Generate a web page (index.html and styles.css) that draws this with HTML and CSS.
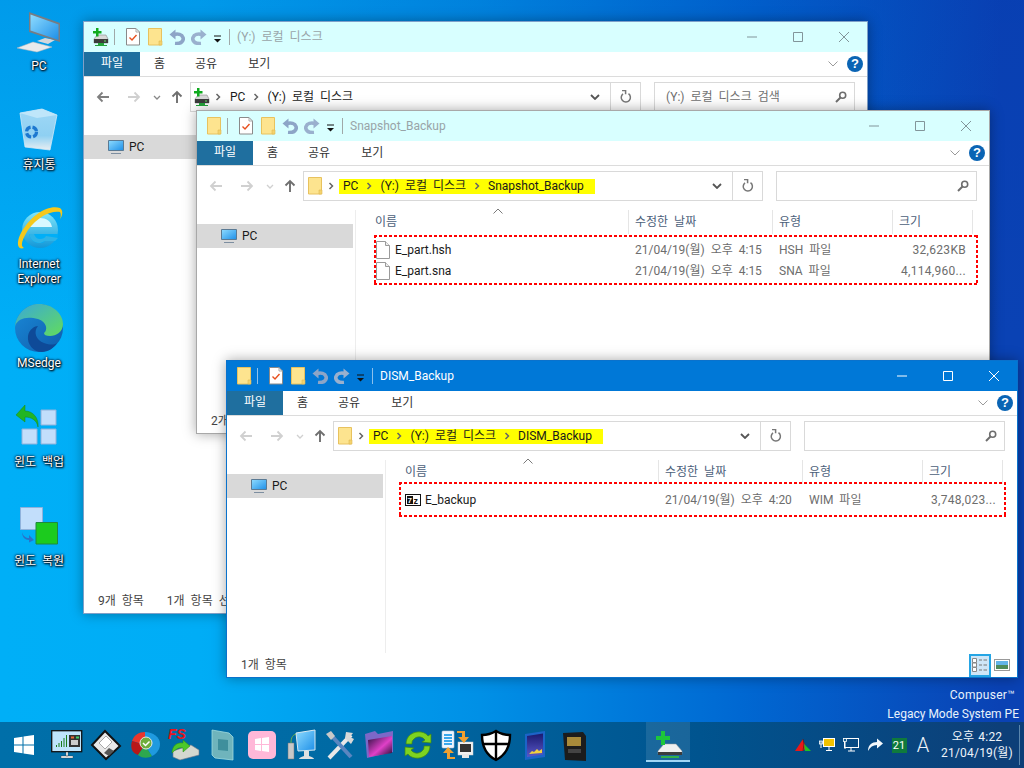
FILE: index.html
```html
<!DOCTYPE html>
<html lang="ko">
<head>
<meta charset="utf-8">
<title>Desktop</title>
<link rel="stylesheet" href="styles.css">
</head>
<body>
<svg class="defs" width="0" height="0" aria-hidden="true">
  <defs>
    <linearGradient id="gScreen" x1="0" y1="0" x2="1" y2="1"><stop offset="0" stop-color="#8fdcff"/><stop offset="1" stop-color="#1d8fe8"/></linearGradient>
    <linearGradient id="gE" x1="0" y1="0" x2="0" y2="1"><stop offset="0" stop-color="#7fe6fa"/><stop offset="1" stop-color="#1297d8"/></linearGradient>
    <linearGradient id="gEdgeG" x1="0" y1="0" x2="1" y2="1"><stop offset="0" stop-color="#3aa8d8"/><stop offset="1" stop-color="#62dc5c"/></linearGradient>
    <linearGradient id="gEdgeB" x1="0" y1="0" x2="1" y2="1"><stop offset="0" stop-color="#1a8ad8"/><stop offset="1" stop-color="#0f5cab"/></linearGradient>
    <linearGradient id="gBin" x1="0" y1="0" x2="0" y2="1"><stop offset="0" stop-color="#9fd8f6"/><stop offset=".65" stop-color="#8fd0f2"/><stop offset="1" stop-color="#e8eef2"/></linearGradient>
    <linearGradient id="gNeb" x1="0" y1="0" x2="1" y2="1"><stop offset="0" stop-color="#2a1040"/><stop offset=".55" stop-color="#e040c8"/><stop offset="1" stop-color="#180a28"/></linearGradient>
    <linearGradient id="gBluePhone" x1="0" y1="0" x2="0" y2="1"><stop offset="0" stop-color="#1a1a70"/><stop offset="1" stop-color="#5a58c8"/></linearGradient>
    <symbol id="i-folder" viewBox="0 0 16 18"><path d="M1.500 .5h13v16.500h-13z" fill="#fde48f" stroke="#e8c25e"/><path d="M12 13h3v4h-3z" fill="#f4d36e" stroke="#e0b850" stroke-width=".6"/></symbol>
    <symbol id="i-note" viewBox="0 0 16 18"><path d="M1.500 .5h9.500l3.500 3.500v13h-13z" fill="#fff" stroke="#8a8a8a"/><path d="M11 .5v3.500h3.500" fill="none" stroke="#aaa"/><path d="M4.500 9.500l2.500 2.500 4.500-5" fill="none" stroke="#e8501e" stroke-width="1.400"/></symbol>
    <symbol id="i-undo" viewBox="0 0 16 16"><path d="M6 14.500C12.500 15 15 11.500 14 8.500 13 5.500 9 4.500 5 5.500" fill="none" stroke="#8da5c7" stroke-width="3.600"/><path d="M.5 5.500L6.500 .5v10z" fill="#8da5c7"/></symbol>
    <symbol id="i-redo" viewBox="0 0 16 16"><path d="M10 14.500C3.500 15 1 11.500 2 8.500 3 5.500 7 4.500 11 5.500" fill="none" stroke="#9ab0ce" stroke-width="3.600"/><path d="M15.500 5.500L9.500 .5v10z" fill="#9ab0ce"/></symbol>
    <symbol id="i-dd" viewBox="0 0 9 8"><path d="M1 1h7" stroke="#111" stroke-width="1"/><path d="M1 4h7l-3.500 3.500z" fill="#111"/></symbol>
    <symbol id="i-drive" viewBox="0 0 16 18"><path d="M4 7h9l2 4v4H1v-4z" fill="#d8d8d8" stroke="#8a8a8a" stroke-width=".6"/><path d="M1 11h14v4H1z" fill="#3c3c3c"/><path d="M11 12.500h2v1h-2z" fill="#5fe05f"/><path d="M5 15h6v2h3v1H2v-1h3z" fill="#23a33a"/><path d="M3 0h2.500v3H8.500v2.500H5.500v3H3v-3H0V3h3z" fill="#0faa1e"/></symbol>
    <symbol id="i-pc" viewBox="0 0 16 16"><path d="M.5 1.500h15v10H.5z" fill="url(#gScreen)" stroke="#5a7a94"/><path d="M3 14.500h10" stroke="#7d8ea0" stroke-width="1"/></symbol>
    <symbol id="i-page" viewBox="0 0 14 18"><path d="M.5 .5h9l4 4v13H.5z" fill="#fff" stroke="#9a9a9a"/><path d="M9.500 .5v4h4" fill="#eee" stroke="#9a9a9a"/></symbol>
    <symbol id="i-back" viewBox="0 0 14 12"><path d="M13 6H2M6.500 1.500L2 6l4.500 4.500" fill="none" stroke="currentColor" stroke-width="1.800"/></symbol>
    <symbol id="i-fwd" viewBox="0 0 14 12"><path d="M1 6h11M7.500 1.500L12 6l-4.500 4.500" fill="none" stroke="currentColor" stroke-width="1.800"/></symbol>
    <symbol id="i-hist" viewBox="0 0 8 5"><path d="M1 1l3 3 3-3" fill="none" stroke="currentColor" stroke-width="1.300"/></symbol>
    <symbol id="i-up" viewBox="0 0 12 14"><path d="M6 13V2M1.500 6.500L6 2l4.500 4.500" fill="none" stroke="#6f6f6f" stroke-width="1.900"/></symbol>
    <symbol id="i-crumb" viewBox="0 0 6 8"><path d="M1.500 1L4.500 4l-3 3" fill="none" stroke="#666" stroke-width="1.500"/></symbol>
    <symbol id="i-down" viewBox="0 0 10 6"><path d="M1 1l4 4 4-4" fill="none" stroke="#555" stroke-width="1.800"/></symbol>
    <symbol id="i-refresh" viewBox="0 0 12 14"><path d="M8.500 3.700A4.600 4.600 0 1 1 3 3.800" fill="none" stroke="#777" stroke-width="1.500"/><path d="M2 .5h3.600v3.800" fill="none" stroke="#777" stroke-width="1.500"/></symbol>
    <symbol id="i-search" viewBox="0 0 12 12"><circle cx="7.700" cy="4.300" r="3" fill="none" stroke="#6e6e6e" stroke-width="1.600"/><path d="M5.500 6.500L1 11" stroke="#6e6e6e" stroke-width="2"/></symbol>
    <symbol id="i-chev" viewBox="0 0 10 6"><path d="M.5 .5L5 5 9.500 .5" fill="none" stroke="#9a9a9a" stroke-width="1"/></symbol>
    <symbol id="i-sort" viewBox="0 0 10 6"><path d="M.5 5.500L5 1l4.500 4.500" fill="none" stroke="#7a7a7a" stroke-width="1"/></symbol>
    <symbol id="i-min" viewBox="0 0 10 10"><path d="M0 5h10" stroke="currentColor" stroke-width="1"/></symbol>
    <symbol id="i-max" viewBox="0 0 10 10"><path d="M.5 .5h9v9h-9z" fill="none" stroke="currentColor" stroke-width="1"/></symbol>
    <symbol id="i-close" viewBox="0 0 10 10"><path d="M0 0l10 10M10 0L0 10" stroke="currentColor" stroke-width="1"/></symbol>
  </defs>
</svg>

<main class="desktop">
  <section class="desk-icons">
    <div class="desk-item">
      <svg class="desk-svg" viewBox="14 8 50 50"><path d="M17 48l16-6 19 5-15 5z" fill="#e8eaec" stroke="#b0b4b8" stroke-width=".5"/><path d="M37 41l8-3 10 2-7 4z" fill="#d4d8dc"/><path d="M29 12l31 11v19L29 32z" fill="#767d84"/><path d="M30.500 14.500l28 10v15.500l-28-9.500z" fill="url(#gScreen)"/></svg>
      <span class="desk-label">PC</span>
    </div>
    <div class="desk-item">
      <svg class="desk-svg" viewBox="14 107 50 50"><path d="M20 113l22-4 15 6-7 35-25-3z" fill="url(#gBin)" stroke="#cfe8f8" stroke-width=".8"/><path d="M20 113l22-4 15 6-20 3z" fill="#bfe6fa"/><circle cx="31.500" cy="132" r="5" fill="none" stroke="#1c78d0" stroke-width="3.200" stroke-dasharray="6 2"/></svg>
      <span class="desk-label">휴지통</span>
    </div>
    <div class="desk-item">
      <svg class="desk-svg" viewBox="14 206 50 50"><circle cx="40" cy="230" r="18" fill="url(#gE)"/><path d="M28 227C29 221 34 218 40 218 46 218 51 221 52 227z" fill="#d8f8ff"/><path d="M29 234h29c0 3-1 5-2 7H45c-2 2-4 2-6 2-5 0-9-4-10-9z" fill="#00aff7"/><path d="M34 234c1 3 3 5 6 5 3 0 5-1 6-3l12 2-3 3H45l-5 2c-6 0-10-4-11-9z" fill="#2db4e8"/><path d="M60 208C50 204 30 214 20 235 16 244 18 250 24 248 20 246 22 240 28 230 38 216 52 210 60 212 61 214 61 216 60 219 63 215 63 210 60 208z" fill="#f5c81c"/></svg>
      <span class="desk-label">Internet<br>Explorer</span>
    </div>
    <div class="desk-item">
      <svg class="desk-svg" viewBox="14 305 50 50"><circle cx="39" cy="328" r="24" fill="url(#gEdgeB)"/><path d="M15 326C17 312 28 304 39 304 53 304 63 314 63 324 63 332 56 336 50 336 46 336 44 335 44 333 48 330 47 322 38 319 27 316 18 318 15 326z" fill="url(#gEdgeG)"/><path d="M42 352C33 352 27 344 28 336 29 329 35 326 38 326 33 332 36 340 44 343 50 345 54 345 57 343 54 348 48 352 42 352z" fill="#0e4a98"/></svg>
      <span class="desk-label">MSedge</span>
    </div>
    <div class="desk-item">
      <svg class="desk-svg" viewBox="14 404 50 50"><path d="M41 410h15v15H41zM22 429h15v15H22zM41 429h15v15H41z" fill="#c2defb" stroke="#8fb2dc"/><path d="M38 427C37 420 31 417 25 417v5L16 415l9-10v6C33 411 39 418 38 427z" fill="#22b522" stroke="#178a17" stroke-width=".5"/></svg>
      <span class="desk-label">윈도 백업</span>
    </div>
    <div class="desk-item">
      <svg class="desk-svg" viewBox="14 503 50 50"><path d="M20.500 507.500h22v22h-22z" fill="#c2defb" stroke="#8fb2dc"/><path d="M36 522.500h21.500v21.500H36z" fill="#1ccb1e" stroke="#1e8a3c"/><path d="M22 532c1 4 4 6 7 6v-3l5 5-5 2.500V540c-4 0-7-3-7-8z" fill="#2a72c8"/></svg>
      <span class="desk-label">윈도 복원</span>
    </div>
  </section>

  <p class="watermark"><span>Compuser™</span><span>Legacy Mode System PE</span></p>

  <!-- Window 1 -->
  <article class="win win-a inactive">
    <header class="titlebar">
      <svg class="qa-icon"><use href="#i-drive"/></svg>
      <i class="qa-sep first"></i>
      <span class="qa"><svg class="qa-icon"><use href="#i-note"/></svg></span>
      <span class="qa"><svg class="qa-icon"><use href="#i-folder"/></svg></span>
      <span class="qa"><svg class="qa-arrow"><use href="#i-undo"/></svg></span>
      <span class="qa"><svg class="qa-arrow"><use href="#i-redo"/></svg></span>
      <span class="qa-dd"><svg class="dd-icon"><use href="#i-dd"/></svg></span>
      <i class="qa-sep last"></i>
      <span class="title-text">(Y:) 로컬 디스크</span>
      <span class="controls">
        <span class="ctl"><svg class="ctl-icon"><use href="#i-min"/></svg></span>
        <span class="ctl"><svg class="ctl-icon"><use href="#i-max"/></svg></span>
        <span class="ctl"><svg class="ctl-icon"><use href="#i-close"/></svg></span>
      </span>
    </header>
    <nav class="tabs">
      <span class="tab-file">파일</span><span class="tab t1">홈</span><span class="tab t2">공유</span><span class="tab t3">보기</span>
      <svg class="rib-chev"><use href="#i-chev"/></svg>
      <span class="help">?</span>
    </nav>
    <div class="toolbar">
      <span class="nav-btns strong">
        <svg class="nb back"><use href="#i-back"/></svg>
        <svg class="nb fwd"><use href="#i-fwd"/></svg>
        <svg class="nb hist"><use href="#i-hist"/></svg>
        <svg class="nb up"><use href="#i-up"/></svg>
      </span>
      <div class="address">
        <svg class="addr-icon"><use href="#i-drive"/></svg>
        <svg class="crumb first-crumb"><use href="#i-crumb"/></svg>
        <div class="crumbs">
          <span>PC</span><svg class="crumb"><use href="#i-crumb"/></svg><span>(Y:) 로컬 디스크</span>
        </div>
        <span class="addr-btn push"><svg class="down"><use href="#i-down"/></svg></span>
        <span class="addr-btn line"><svg class="refresh"><use href="#i-refresh"/></svg></span>
      </div>
      <div class="searchbox"><span class="placeholder">(Y:) 로컬 디스크 검색</span><svg class="search"><use href="#i-search"/></svg></div>
    </div>
    <div class="content">
      <aside class="pane"><div class="pane-item"><svg class="pc-icon"><use href="#i-pc"/></svg>PC</div></aside>
    </div>
    <footer class="status"><span class="st1">9개 항목</span><span class="st2">1개 항목 선택함</span></footer>
  </article>

  <!-- Window 2 -->
  <article class="win win-b inactive">
    <header class="titlebar">
      <svg class="qa-icon"><use href="#i-folder"/></svg>
      <i class="qa-sep first"></i>
      <span class="qa"><svg class="qa-icon"><use href="#i-note"/></svg></span>
      <span class="qa"><svg class="qa-icon"><use href="#i-folder"/></svg></span>
      <span class="qa"><svg class="qa-arrow"><use href="#i-undo"/></svg></span>
      <span class="qa"><svg class="qa-arrow"><use href="#i-redo"/></svg></span>
      <span class="qa-dd"><svg class="dd-icon"><use href="#i-dd"/></svg></span>
      <i class="qa-sep last"></i>
      <span class="title-text">Snapshot_Backup</span>
      <span class="controls">
        <span class="ctl"><svg class="ctl-icon"><use href="#i-min"/></svg></span>
        <span class="ctl"><svg class="ctl-icon"><use href="#i-max"/></svg></span>
        <span class="ctl"><svg class="ctl-icon"><use href="#i-close"/></svg></span>
      </span>
    </header>
    <nav class="tabs">
      <span class="tab-file">파일</span><span class="tab t1">홈</span><span class="tab t2">공유</span><span class="tab t3">보기</span>
      <svg class="rib-chev"><use href="#i-chev"/></svg>
      <span class="help">?</span>
    </nav>
    <div class="toolbar">
      <span class="nav-btns">
        <svg class="nb back"><use href="#i-back"/></svg>
        <svg class="nb fwd"><use href="#i-fwd"/></svg>
        <svg class="nb hist"><use href="#i-hist"/></svg>
        <svg class="nb up"><use href="#i-up"/></svg>
      </span>
      <div class="address">
        <svg class="addr-icon"><use href="#i-folder"/></svg>
        <svg class="crumb first-crumb"><use href="#i-crumb"/></svg>
        <div class="crumbs mark">
          <span>PC</span><svg class="crumb"><use href="#i-crumb"/></svg><span>(Y:) 로컬 디스크</span><svg class="crumb"><use href="#i-crumb"/></svg><span>Snapshot_Backup</span>
        </div>
        <span class="addr-btn push"><svg class="down"><use href="#i-down"/></svg></span>
        <span class="addr-btn line"><svg class="refresh"><use href="#i-refresh"/></svg></span>
      </div>
      <div class="searchbox"><svg class="search"><use href="#i-search"/></svg></div>
    </div>
    <div class="content">
      <aside class="pane"><div class="pane-item"><svg class="pc-icon"><use href="#i-pc"/></svg>PC</div></aside>
      <div class="list">
        <svg class="sort"><use href="#i-sort"/></svg>
        <div class="row head"><span class="c-name">이름</span><span class="c-date">수정한 날짜</span><span class="c-type">유형</span><span class="c-size">크기</span></div>
        <div class="row item"><span class="c-name"><svg class="page"><use href="#i-page"/></svg>E_part.hsh</span><span class="c-date">21/04/19(월) 오후 4:15</span><span class="c-type">HSH 파일</span><span class="c-size">32,623KB</span></div>
        <div class="row item"><span class="c-name"><svg class="page"><use href="#i-page"/></svg>E_part.sna</span><span class="c-date">21/04/19(월) 오후 4:15</span><span class="c-type">SNA 파일</span><span class="c-size">4,114,960...</span></div>
      </div>
    </div>
    <footer class="status"><span class="st1">2개 항목</span></footer>
    <div class="redbox red-b"></div>
  </article>

  <!-- Window 3 -->
  <article class="win win-c active">
    <header class="titlebar">
      <svg class="qa-icon"><use href="#i-folder"/></svg>
      <i class="qa-sep first"></i>
      <span class="qa"><svg class="qa-icon"><use href="#i-note"/></svg></span>
      <span class="qa"><svg class="qa-icon"><use href="#i-folder"/></svg></span>
      <span class="qa"><svg class="qa-arrow"><use href="#i-undo"/></svg></span>
      <span class="qa"><svg class="qa-arrow"><use href="#i-redo"/></svg></span>
      <span class="qa-dd"><svg class="dd-icon"><use href="#i-dd"/></svg></span>
      <i class="qa-sep last"></i>
      <span class="title-text">DISM_Backup</span>
      <span class="controls">
        <span class="ctl"><svg class="ctl-icon"><use href="#i-min"/></svg></span>
        <span class="ctl"><svg class="ctl-icon"><use href="#i-max"/></svg></span>
        <span class="ctl"><svg class="ctl-icon"><use href="#i-close"/></svg></span>
      </span>
    </header>
    <nav class="tabs">
      <span class="tab-file">파일</span><span class="tab t1">홈</span><span class="tab t2">공유</span><span class="tab t3">보기</span>
      <svg class="rib-chev"><use href="#i-chev"/></svg>
      <span class="help">?</span>
    </nav>
    <div class="toolbar">
      <span class="nav-btns">
        <svg class="nb back"><use href="#i-back"/></svg>
        <svg class="nb fwd"><use href="#i-fwd"/></svg>
        <svg class="nb hist"><use href="#i-hist"/></svg>
        <svg class="nb up"><use href="#i-up"/></svg>
      </span>
      <div class="address">
        <svg class="addr-icon"><use href="#i-folder"/></svg>
        <svg class="crumb first-crumb"><use href="#i-crumb"/></svg>
        <div class="crumbs mark">
          <span>PC</span><svg class="crumb"><use href="#i-crumb"/></svg><span>(Y:) 로컬 디스크</span><svg class="crumb"><use href="#i-crumb"/></svg><span>DISM_Backup</span>
        </div>
        <span class="addr-btn push"><svg class="down"><use href="#i-down"/></svg></span>
        <span class="addr-btn line"><svg class="refresh"><use href="#i-refresh"/></svg></span>
      </div>
      <div class="searchbox"><svg class="search"><use href="#i-search"/></svg></div>
    </div>
    <div class="content">
      <aside class="pane"><div class="pane-item"><svg class="pc-icon"><use href="#i-pc"/></svg>PC</div></aside>
      <div class="list">
        <svg class="sort"><use href="#i-sort"/></svg>
        <div class="row head"><span class="c-name">이름</span><span class="c-date">수정한 날짜</span><span class="c-type">유형</span><span class="c-size">크기</span></div>
        <div class="row item"><span class="c-name"><svg class="page" viewBox="0 0 16 16"><rect x=".5" y="2.500" width="15" height="11" fill="#fff" stroke="#111"/><rect x="2" y="4" width="6" height="8" fill="#111"/><text x="2.600" y="11" class="sz-7">7</text><text x="8.500" y="11.500" class="sz-z">z</text></svg>E_backup</span><span class="c-date">21/04/19(월) 오후 4:20</span><span class="c-type">WIM 파일</span><span class="c-size">3,748,023...</span></div>
      </div>
    </div>
    <footer class="status"><span class="st1">1개 항목</span>
      <span class="views">
        <span class="view on"><svg class="view-svg" viewBox="0 0 16 16"><path d="M.5 1.500h4v4h-4zM.5 6h4v4h-4zM.5 10.500h4v4h-4z" fill="#fff" stroke="#888"/><path d="M7 3h3M11.500 3h3.500M7 8h3M11.500 8h3.500M7 13h3M11.500 13h3.500" stroke="#777" stroke-width="1.200"/></svg></span>
        <span class="view"><svg class="view-svg" viewBox="0 0 16 14"><rect x=".5" y="1.500" width="15" height="11" fill="#fff" stroke="#999"/><rect x="2" y="3" width="12" height="4" fill="#62b4e8"/><rect x="2" y="7" width="12" height="4" fill="#4e8a5a"/></svg></span>
      </span>
    </footer>
    <div class="redbox red-c"></div>
  </article>

  <footer class="taskbar">
    <span class="start"><svg class="tb-win" viewBox="0 0 20 20"><path d="M0 3l8.500-1.300V9.500H0zM9.500 1.500L20 0v9.500H9.500zM0 10.500h8.500v7.800L0 17zM9.500 10.500H20V20L9.500 18.500z" fill="#fff"/></svg></span>
    <span class="tb"><svg class="tb-svg" viewBox="0 0 32 32"><rect x=".7" y="1.700" width="30" height="21" fill="#bfe4fb" stroke="#111" stroke-width="1.300"/><path d="M5 18v-2h1v2zM7.500 18v-4h1v4zM10 18v-6h1v6zM12.500 18v-9h1v9zM15 18V6h1v12z" fill="#1a7a1a"/><rect x="18" y="6" width="11" height="12" fill="#333"/><rect x="20" y="7.500" width="3" height="2" fill="#e86a3a"/><rect x="25" y="7.500" width="3" height="2" fill="#3fd06a"/><rect x="20" y="11" width="7" height="5" fill="#ccc"/><path d="M15 23h2v4h-2zM10 27h12v2H10z" fill="#fff" stroke="#333" stroke-width=".4"/></svg></span>
    <span class="tb"><svg class="tb-svg" viewBox="0 0 32 32"><path d="M15 2L30 17 16 30 2 16z" fill="#e8e8e8" stroke="#111" stroke-width="2"/><path d="M9 14l7-7 6 6-7 7z" fill="#fff" stroke="#888" stroke-width=".7"/><path d="M14 24l5-5 5 3-5 5z" fill="#555"/></svg></span>
    <span class="tb"><svg class="tb-svg" viewBox="0 0 32 32"><path d="M16 16L3 12C5 6 10 3 16 3z" fill="#e8362c"/><path d="M16 16L3 12C1 19 3 24 9 26z" fill="#b81818"/><path d="M16 16L9 26C14 30 20 29 23 27z" fill="#2ea84e"/><path d="M16 16V3C24 3 31 8 31 15 31 21 27 25 23 27z" fill="#1f9adf"/><circle cx="17" cy="14" r="6" fill="#6fae3c" stroke="#e8e8e8"/><path d="M14 14l2.500 2.500 4-4" fill="none" stroke="#fff" stroke-width="1.500"/></svg></span>
    <span class="tb"><svg class="tb-svg" viewBox="0 0 32 32"><text x="0" y="10" class="fs-text">FS</text><path d="M5 22l18-6 8 5v5L12 31 5 28z" fill="#d4d8d0" stroke="#778" stroke-width=".6"/><path d="M4 24C4 17 9 13 15 14v-3l7 6-7 6v-4C11 18 8 20 4 24z" fill="#4cc82a" stroke="#2a8a14" stroke-width=".5"/></svg></span>
    <span class="tb"><svg class="tb-svg" viewBox="0 0 32 32"><path d="M5 1l17 3 4 4v23L8 29 5 26z" fill="#6fb4bc" stroke="#9fdce0" stroke-width=".8"/><path d="M11 10l10 1v11l-10-1z" fill="#3f8f9c"/></svg></span>
    <span class="tb"><svg class="tb-svg" viewBox="0 0 32 32"><rect x="2" y="2" width="28" height="28" rx="5" fill="#ffb8d8"/><path d="M9 10l6-1v6H9zM16 9l7-1v7h-7zM9 16h6v6l-6-1zM16 16h7v7l-7-1z" fill="#fff"/></svg></span>
    <span class="tb"><svg class="tb-svg" viewBox="0 0 32 32"><path d="M3 14h6v16H3z" fill="#c8c8c8" stroke="#777" stroke-width=".5"/><path d="M6 14C6 8 8 6 11 5" fill="none" stroke="#6ab04c" stroke-width="1"/><path d="M11 4l19-3v20l-17 1z" fill="url(#gScreen)" stroke="#d8e8f0"/><path d="M19 22h5v5c3 1 5 2 5 3H14c0-1 2-2 5-3z" fill="#e0e0e0"/></svg></span>
    <span class="tb"><svg class="tb-svg" viewBox="0 0 32 32"><path d="M5 29L27 6" stroke="#e8e8e8" stroke-width="4"/><path d="M6 5l21 23" stroke="#5a86c0" stroke-width="4"/><path d="M2 5l5-3 4 5-4 4z" fill="#c8c8c8"/><path d="M22 3l7 1-3 4 4 2-3 5-6-6z" fill="#d8d8d8"/></svg></span>
    <span class="tb"><svg class="tb-svg" viewBox="0 0 32 32"><path d="M2 5l10-3 3 3 15-3v21L4 29z" fill="#7c68c8"/><path d="M5 11l24-4v17L6 28z" fill="url(#gNeb)"/></svg></span>
    <span class="tb"><svg class="tb-svg" viewBox="0 0 32 32"><path d="M4 15C4 7 11 2 19 3c3 .5 6 2 7 4l3-2v9l-9-1 3-2c-3-4-8-4-11-1-2 1.500-2 3-2 5z" fill="#7ed321" stroke="#3d8a10" stroke-width=".7"/><path d="M28 17c0 8-7 13-15 12-3-.5-6-2-7-4l-3 2v-9l9 1-3 2c3 4 8 4 11 1 2-1.500 2-3 2-5z" fill="#7ed321" stroke="#3d8a10" stroke-width=".7"/></svg></span>
    <span class="tb"><svg class="tb-svg" viewBox="0 0 32 32"><rect x="1" y="2" width="12" height="17" rx="1" fill="#eef6ff" stroke="#b8c8d8" stroke-width=".6"/><path d="M3 6h8M3 9h8M3 12h8M3 15h8" stroke="#3aa8ec" stroke-width="1.800"/><rect x="17" y="13" width="15" height="13" fill="#f2f2f2" stroke="#ccc" stroke-width=".5"/><rect x="19" y="15" width="11" height="8" fill="#333"/><rect x="21" y="26" width="7" height="3" fill="#e8e8e8"/><path d="M16 2h8v6h4l-5 6-6-6h4V4h-5z" fill="#f0a030"/><path d="M14 30H6v-6H2l5-6 6 6H9v4h5z" fill="#f0a030"/></svg></span>
    <span class="tb"><svg class="tb-svg" viewBox="0 0 32 32"><path d="M16 2c4 2.500 9 4 14 4 0 12-4 20-14 25C6 26 2 18 2 6c5 0 10-1.500 14-4z" fill="#fff" stroke="#000" stroke-width="2.400"/><path d="M16 3v27M3 15h26" stroke="#000" stroke-width="2.400"/></svg></span>
    <span class="tb"><svg class="tb-svg" viewBox="0 0 32 32"><path d="M6 5l20-3v26L6 31z" fill="#1c64c8"/><path d="M8 7l16-2.500v21L8 28z" fill="url(#gBluePhone)"/><path d="M10 25l3-3 2 1 3-3 2 2 3-2v4z" fill="#f0d040"/></svg></span>
    <span class="tb"><svg class="tb-svg" viewBox="0 0 32 32"><path d="M5 4l20-1 3 4v25l-21-1z" fill="#1c1c1c"/><rect x="9" y="8" width="14" height="9" fill="#a88a3a"/><rect x="10" y="20" width="13" height="4" fill="#444"/></svg></span>
    <span class="tb-active"><svg class="tb-svg" viewBox="0 0 32 32"><path d="M12 15h12l6 7v3H6v-3z" fill="#f0f0f0" stroke="#999" stroke-width=".5"/><path d="M6 23h24v3H6z" fill="#3c3c3c"/><path d="M9 27h18v2H9z" fill="#32b04a"/><path d="M9 2h4v5h5v4h-5v5H9v-5H4V7h5z" fill="#1dc63a"/></svg></span>
    <div class="tray">
      <span class="ti"><svg class="tray-svg" viewBox="0 0 16 14"><path d="M8 1L0 13h8l3-3z" fill="#e81818"/><path d="M8 1l1 5-1 7" fill="none" stroke="#222" stroke-width=".6"/><path d="M9 6l7 7H10z" fill="#22c022"/></svg></span>
      <span class="ti"><svg class="tray-svg" viewBox="0 0 16 14"><rect x="4.500" y=".5" width="11" height="8" fill="#f2c200" stroke="#fff"/><path d="M10 9v3M7 12.500h6M2 3v7" stroke="#fff"/><rect x=".5" y="3" width="3" height="3" fill="none" stroke="#fff" stroke-width=".8"/></svg></span>
      <span class="ti"><svg class="tray-svg" viewBox="0 0 16 14"><rect x="1.500" y=".5" width="14" height="9" fill="none" stroke="#fff"/><rect x=".5" y=".5" width="3" height="3" fill="#145a8a" stroke="#fff" stroke-width=".8"/><path d="M2 4v7M8 10v3M5 13h7" stroke="#fff"/></svg></span>
      <span class="ti"><svg class="tray-svg" viewBox="0 0 16 14"><path d="M1 13C1 7 5 4 10 4V.5L16 5.500 10 10.500V7C6 7 3 9 1 13z" fill="#f4f8fc"/></svg></span>
      <span class="ti"><span class="badge21">21</span></span>
      <span class="ti ime">A</span>
      <div class="clock"><span>오후 4:22</span><span>21/04/19(월)</span></div>
      <i class="show-desk"></i>
    </div>
  </footer>
</main>
</body>
</html>
```
FILE: styles.css
```css
* { box-sizing: border-box; }
html, body { margin: 0; padding: 0; height: 100%; overflow: hidden; }
body { font: 12px/16px Roboto, "Noto Sans CJK KR", sans-serif; color: #1a1a1a; word-spacing: 3px; }
.defs { position: absolute; }
svg { display: block; flex: none; }

.desktop {
  position: relative;
  width: 1024px;
  height: 768px;
  overflow: hidden;
  background:
    linear-gradient(180deg, rgba(0, 50, 170, .16) 0, rgba(0, 50, 170, 0) 45%),
    linear-gradient(90deg, #00aff7 0, #00adf6 200px, #0090e6 480px, #0068d2 740px, #0a42b4 1000px);
}

/* desktop icons */
.desk-icons {
  position: absolute;
  left: 0;
  top: 6px;
  width: 78px;
  display: flex;
  flex-direction: column;
}
.desk-item {
  height: 99px;
  padding-top: 2px;
  display: flex;
  flex-direction: column;
  align-items: center;
  color: #fff;
}
.desk-svg { width: 50px; height: 50px; overflow: visible; }
.desk-label {
  margin-top: 1px;
  line-height: 15px;
  text-align: center;
  text-shadow: 0 0 2px #000, 1px 1px 2px #000, 0 0 3px #003;
}

.watermark {
  position: absolute;
  right: 5px;
  top: 685px;
  margin: 0;
  width: 240px;
  display: flex;
  flex-direction: column;
  align-items: flex-end;
  color: #e8f2fb;
  text-align: right;
  word-spacing: 0;
}
.watermark span:first-child { margin-right: 4px; line-height: 20px; letter-spacing: .3px; }
.watermark span:last-child { line-height: 19px; }

/* windows */
.win {
  position: absolute;
  display: flex;
  flex-direction: column;
  background: #fff;
  border: 1px solid #a8a8a8;
  box-shadow: 0 0 12px rgba(0, 0, 0, .35);
  overflow: hidden;
}
.win-a { left: 83px; top: 21px; width: 785px; height: 593px; border-color: #7fa0c8; }
.win-b { left: 196px; top: 110px; width: 794px; height: 324px; }
.win-c { left: 226px; top: 360px; width: 792px; height: 318px; border-color: #0a72cc; }

.titlebar {
  height: 30px;
  flex: none;
  display: flex;
  align-items: center;
  padding-left: 9px;
  background: #d8ffff;
}
.active .titlebar { background: #0078d7; }
.qa { width: 22px; display: flex; justify-content: center; }
.qa-icon { width: 16px; height: 18px; }
.qa-arrow { width: 16px; height: 16px; }
.qa-dd { width: 14px; display: flex; justify-content: center; }
.dd-icon { width: 9px; height: 8px; margin-top: 3px; }
.qa-sep { width: 1px; height: 16px; background: #a0a8a8; }
.qa-sep.first { margin: 0 7px 0 5px; }
.qa-sep.last { margin: 0 7px 0 5px; }
.title-text { color: #98a4a8; }
.active .title-text { color: #fff; }
.active .qa-sep { background: #8cc0ec; }
.controls { margin-left: auto; display: flex; color: #82959a; }
.active .controls { color: #fff; }
.ctl { width: 46px; height: 30px; display: flex; align-items: center; justify-content: center; }
.ctl-icon { width: 10px; height: 10px; }

.tabs {
  position: relative;
  height: 25px;
  flex: none;
  display: flex;
  align-items: center;
  border-bottom: 1px solid #dcdcdc;
  padding-bottom: 1px;
}
.tab-file {
  width: 56px;
  height: 24px;
  background: #1f6f9f;
  color: #fff;
  text-align: center;
  line-height: 23px;
  margin-top: 1px;
}
.tab { color: #333; }
.t1 { margin-left: 14px; }
.t2 { margin-left: 30px; }
.t3 { margin-left: 31px; }
.rib-chev { width: 10px; height: 6px; margin-left: auto; margin-right: 9px; }
.help {
  width: 16px;
  height: 16px;
  margin-right: 4px;
  border-radius: 50%;
  background: #0a64b4;
  color: #fff;
  font: bold 13px/16px "Liberation Sans", sans-serif;
  text-align: center;
}

.toolbar {
  flex: none;
  display: flex;
  padding: 5px 12px 9px 0;
}
.nav-btns {
  position: relative;
  width: 106px;
  flex: none;
  display: flex;
  align-items: center;
  color: #d0d0d0;
}
.nb.back { width: 14px; height: 12px; margin-left: 12px; }
.nb.fwd { width: 14px; height: 12px; margin-left: 17px; }
.nb.hist { width: 8px; height: 5px; margin-left: 12px; }
.nb.up { width: 12px; height: 14px; margin-left: 10px; }
.strong .back { color: #7f7f7f; }
.strong .hist { color: #888; }
.address {
  flex: 1;
  height: 30px;
  display: flex;
  align-items: center;
  border: 1px solid #d9d9d9;
  margin-right: 13px;
  min-width: 0;
}
.addr-icon { width: 16px; height: 18px; margin-left: 3px; }
.crumb { width: 6px; height: 8px; }
.first-crumb { margin-left: 5px; margin-right: 5px; }
.crumbs {
  height: 15px;
  display: flex;
  align-items: center;
  gap: 8px;
  padding: 0 11px 0 4px;
  color: #1a1a1a;
  white-space: nowrap;
}
.crumbs.mark { background: #ffff00; }
.addr-btn { width: 30px; height: 28px; display: flex; align-items: center; justify-content: center; }
.addr-btn.push { margin-left: auto; }
.addr-btn.line { border-left: 1px solid #d9d9d9; }
.down { width: 10px; height: 6px; }
.refresh { width: 12px; height: 14px; }
.searchbox {
  width: 201px;
  height: 30px;
  flex: none;
  display: flex;
  align-items: center;
  border: 1px solid #d9d9d9;
  padding: 0 7px 0 11px;
}
.placeholder { color: #6f6f6f; white-space: nowrap; }
.search { width: 12px; height: 12px; margin-left: auto; }

.content { flex: 1; display: flex; min-height: 0; }
.pane {
  width: 159px;
  flex: none;
  padding-top: 14px;
  border-right: 1px solid #ededed;
}
.pane-item {
  width: 156px;
  height: 24px;
  display: flex;
  align-items: center;
  padding-left: 24px;
  background: #d9d9d9;
  white-space: nowrap;
}
.pc-icon { width: 16px; height: 16px; margin-right: 5px; }
.list { position: relative; flex: 1; min-width: 0; }
.sort { position: absolute; left: 137px; top: -2px; width: 10px; height: 6px; }
.row { display: flex; align-items: center; white-space: nowrap; }
.row.head { height: 24px; color: #4c607a; margin-bottom: 5px; }
.row.item { height: 21px; color: #6d6d6d; }
.c-name { width: 273px; padding-left: 19px; display: flex; align-items: center; gap: 4px; }
.row.item .c-name { color: #1a1a1a; }
.c-date { width: 144px; padding-left: 6px; }
.c-type { width: 120px; padding-left: 6px; }
.c-size { width: 80px; padding: 0 7px 0 6px; }
.row.item .c-size { text-align: right; letter-spacing: .3px; }
.row.head span { height: 24px; line-height: 24px; border-right: 1px solid #e5e5e5; }
.row.head .c-name { display: block; }
.page { width: 16px; height: 18px; }
.sz-7 { font: bold 8px "Liberation Sans", sans-serif; fill: #fff; }
.sz-z { font: bold 9px "Liberation Sans", sans-serif; fill: #111; }

.status {
  position: relative;
  height: 24px;
  flex: none;
  display: flex;
  align-items: center;
  color: #444;
  white-space: nowrap;
}
.st1 { margin-left: 14px; }
.st2 { margin-left: 23px; }
.views { display: flex; align-items: center; margin-left: auto; margin-right: 6px; }
.view { width: 18px; height: 23px; display: flex; align-items: center; justify-content: center; }
.view.on { width: 22px; background: #cfe6f7; border: 2px solid #26a5e4; margin-right: 2px; }
.view-svg { width: 16px; height: 16px; }

.redbox {
  position: absolute;
  background:
    linear-gradient(90deg, #f00 3px, transparent 3px) 0 0 / 5px 2px repeat-x,
    linear-gradient(90deg, #f00 3px, transparent 3px) 0 100% / 5px 2px repeat-x,
    linear-gradient(180deg, #f00 3px, transparent 3px) 0 0 / 2px 5px repeat-y,
    linear-gradient(180deg, #f00 3px, transparent 3px) 100% 0 / 2px 5px repeat-y;
}
.red-b { left: 177px; top: 124px; width: 604px; height: 50px; }
.red-c { left: 172px; top: 121px; width: 607px; height: 35px; }

/* taskbar */
.taskbar {
  position: absolute;
  left: 0;
  right: 0;
  bottom: 0;
  height: 46px;
  display: flex;
  align-items: center;
  background: linear-gradient(90deg, #006fa9 0, #006aa4 340px, #00548f 700px, #0d3f78 1000px);
}
.start { width: 47px; display: flex; justify-content: center; }
.tb-win { width: 20px; height: 20px; }
.tb { width: 39px; display: flex; justify-content: center; }
.tb-svg { width: 32px; height: 32px; overflow: visible; }
.fs-text { font: italic bold 14px "Liberation Sans", sans-serif; fill: #e8141c; word-spacing: 0; }
.tb-active {
  width: 44px;
  height: 40px;
  align-self: flex-start;
  margin-left: 53px;
  display: flex;
  align-items: center;
  justify-content: center;
  background: rgba(255, 255, 255, .1);
  border-bottom: 2px solid #9ed6f5;
  padding-top: 7px;
}
.tray { margin-left: auto; display: flex; align-items: center; height: 46px; color: #eef4fa; }
.ti { width: 24px; display: flex; justify-content: center; align-items: center; }
.tray-svg { width: 16px; height: 14px; }
.badge21 { width: 15px; height: 15px; background: #0f7a3c; color: #fff; font-size: 11px; line-height: 15px; text-align: center; }
.ime { font-size: 20px; font-weight: 300; }
.clock {
  width: 84px;
  display: flex;
  flex-direction: column;
  align-items: center;
  line-height: 16px;
  white-space: nowrap;
  word-spacing: 1px;
  letter-spacing: .2px;
}
.show-desk { width: 1px; height: 40px; background: #5a86ad; margin-right: 4px; }
```
